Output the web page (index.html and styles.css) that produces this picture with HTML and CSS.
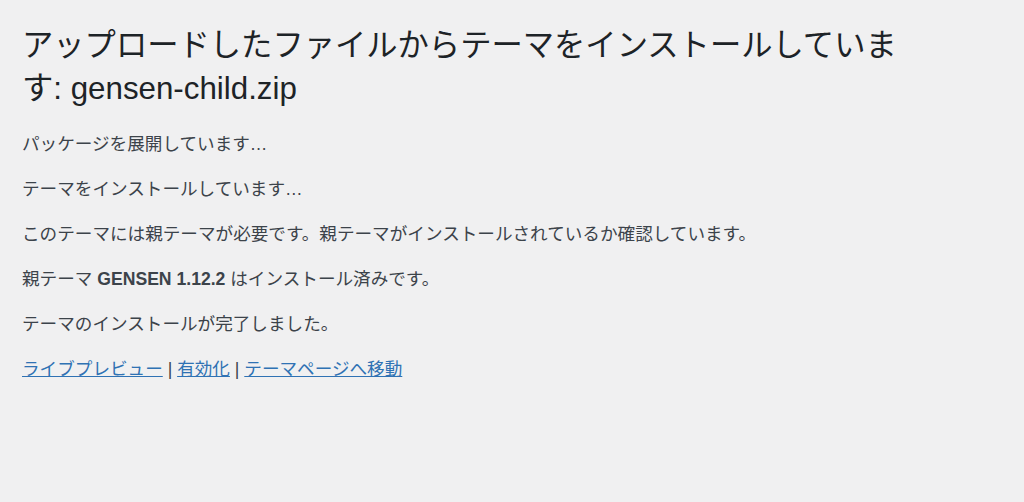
FILE: index.html
```html
<!DOCTYPE html>
<html lang="ja">
<head>
    <meta charset="utf-8">
    <title>テーマのインストール</title>
    <link rel="stylesheet" href="styles.css">
</head>
<body>
    <div class="wrap">
        <h1>アップロードしたファイルからテーマをインストールしています: gensen-child.zip</h1>

        <p>パッケージを展開しています…</p>
        <p>テーマをインストールしています…</p>
        <p>このテーマには親テーマが必要です。親テーマがインストールされているか確認しています。</p>
        <p>親テーマ <strong>GENSEN 1.12.2</strong> はインストール済みです。</p>
        <p>テーマのインストールが完了しました。</p>

        <p class="actions">
            <a href="#">ライブプレビュー</a> | <a href="#">有効化</a> | <a href="#">テーマページへ移動</a>
        </p>
    </div>
</body>
</html>
```

FILE: styles.css
```css
body {
    margin: 0;
    background-color: #f0f0f1;
    color: #3c434a;
    font-family: "Liberation Sans", "Noto Sans CJK JP", sans-serif;
}

.wrap {
    padding: 0 22px;
    max-width: 890px;
}

h1 {
    color: #1d2327;
    font-size: 31.3px;
    font-weight: 400;
    line-height: 43px;
    margin: 24px 0 21px;
}

p {
    font-size: 17.6px;
    line-height: 26px;
    margin: 0 0 19px;
}

strong {
    font-weight: 700;
}

.actions a {
    color: #2f72b4;
    text-decoration: underline;
}
```
